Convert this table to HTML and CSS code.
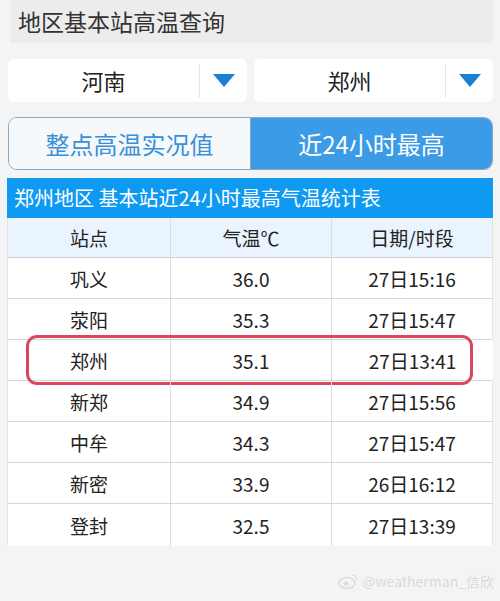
FILE: index.html
```html
<!DOCTYPE html>
<html lang="zh">
<head>
<meta charset="utf-8">
<link rel="stylesheet" href="styles.css">
</head>
<body>
<div class="page">
  <div class="title">地区基本站高温查询</div>
  <div class="selects">
    <div class="select">
      <span class="select-text">河南</span>
      <span class="select-arrow"><svg width="22" height="13" viewBox="0 0 22 13"><path d="M0 0H22L11 13Z" fill="#1b7fd8"/></svg></span>
    </div>
    <div class="select">
      <span class="select-text">郑州</span>
      <span class="select-arrow"><svg width="22" height="13" viewBox="0 0 22 13"><path d="M0 0H22L11 13Z" fill="#1b7fd8"/></svg></span>
    </div>
  </div>
  <div class="tabs">
    <div class="tab">整点高温实况值</div>
    <div class="tab active">近24小时最高</div>
  </div>
  <div class="table">
    <div class="caption">郑州地区 基本站近24小时最高气温统计表</div>
    <div class="row head"><span>站点</span><span>气温℃</span><span>日期/时段</span></div>
    <div class="row"><span>巩义</span><span>36.0</span><span>27日15:16</span></div>
    <div class="row"><span>荥阳</span><span>35.3</span><span>27日15:47</span></div>
    <div class="row mark"><span>郑州</span><span>35.1</span><span>27日13:41</span><i class="ring"></i></div>
    <div class="row"><span>新郑</span><span>34.9</span><span>27日15:56</span></div>
    <div class="row"><span>中牟</span><span>34.3</span><span>27日15:47</span></div>
    <div class="row"><span>新密</span><span>33.9</span><span>26日16:12</span></div>
    <div class="row last"><span>登封</span><span>32.5</span><span>27日13:39</span></div>
  </div>
  <div class="watermark">
    <svg width="20" height="16" viewBox="0 0 20 16"><ellipse cx="9" cy="10" rx="8" ry="5.5" fill="none" stroke="#dcdcdc" stroke-width="1.6"/><circle cx="8" cy="10.5" r="2.2" fill="#dcdcdc"/><path d="M14 2a5 5 0 0 1 5 5" fill="none" stroke="#dcdcdc" stroke-width="1.4"/></svg>
    <span>@weatherman_信欣</span>
  </div>
</div>
</body>
</html>
```
FILE: styles.css
```css
html, body {
  margin: 0;
  padding: 0;
  background: #f4f4f4;
}
body {
  width: 500px;
  height: 601px;
  overflow: hidden;
  font-family: "Noto Sans CJK SC", "Noto Sans", sans-serif;
  color: #222;
}
.page {
  position: relative;
  height: 601px;
  padding: 0 7px 0 8px;
  box-sizing: border-box;
}
.title {
  margin: -1px 0 0 2px;
  height: 44px;
  background: #ececec;
  font-size: 23px;
  line-height: 44px;
  padding-left: 8px;
  color: #333;
}
.selects {
  display: flex;
  gap: 7px;
  margin-top: 16px;
}
.select {
  flex: 1;
  height: 43px;
  background: #fff;
  border-radius: 6px;
  display: flex;
  align-items: center;
}
.select-text {
  flex: 1;
  text-align: center;
  font-size: 22px;
  color: #222;
  line-height: 43px;
}
.select-arrow {
  width: 47px;
  height: 34px;
  border-left: 1px solid #e6e6e6;
  display: flex;
  align-items: center;
  justify-content: center;
}
.tabs {
  display: flex;
  margin-top: 15px;
  height: 53px;
  border: 1.5px solid #86a9c7;
  border-radius: 9px;
  overflow: hidden;
  box-sizing: border-box;
}
.tab {
  flex: 1;
  display: flex;
  align-items: center;
  justify-content: center;
  font-size: 24px;
  color: #3a8fd6;
  background: #f6f9fc;
}
.tab.active {
  background: #3c9be6;
  color: #fff;
  border-left: 1px solid #86a9c7;
}
.table {
  margin-top: 8px;
  margin-left: -1px;
  background: #fff;
}
.caption {
  height: 40px;
  line-height: 40px;
  background: #0f9af2;
  color: #fff;
  font-size: 20px;
  padding-left: 7px;
}
.row {
  position: relative;
  display: grid;
  grid-template-columns: 163px 161px 1fr;
  height: 41px;
  border-bottom: 1px solid #d6d6d6;
  box-sizing: border-box;
}
.row.head {
  height: 40px;
  background: #eaf4fe;
  border-bottom-color: #c9d3de;
}
.row.last {
  border-bottom: none;
  height: 42px;
}
.row span {
  display: flex;
  align-items: center;
  justify-content: center;
  font-size: 19px;
  color: #222;
  border-left: 1px solid #dcdcdc;
}
.row span:first-child {
  border-left: 1px solid #e6e6e6;
}
.row span:last-child {
  border-right: 1px solid #e6e6e6;
}
.ring {
  position: absolute;
  left: 19px;
  right: 20px;
  top: -5px;
  bottom: -5px;
  border: 3px solid #d8475c;
  border-radius: 11px;
}
.watermark {
  position: absolute;
  right: 6px;
  bottom: 9px;
  display: flex;
  align-items: center;
  gap: 4px;
  color: #dadada;
  font-size: 14px;
}
```
